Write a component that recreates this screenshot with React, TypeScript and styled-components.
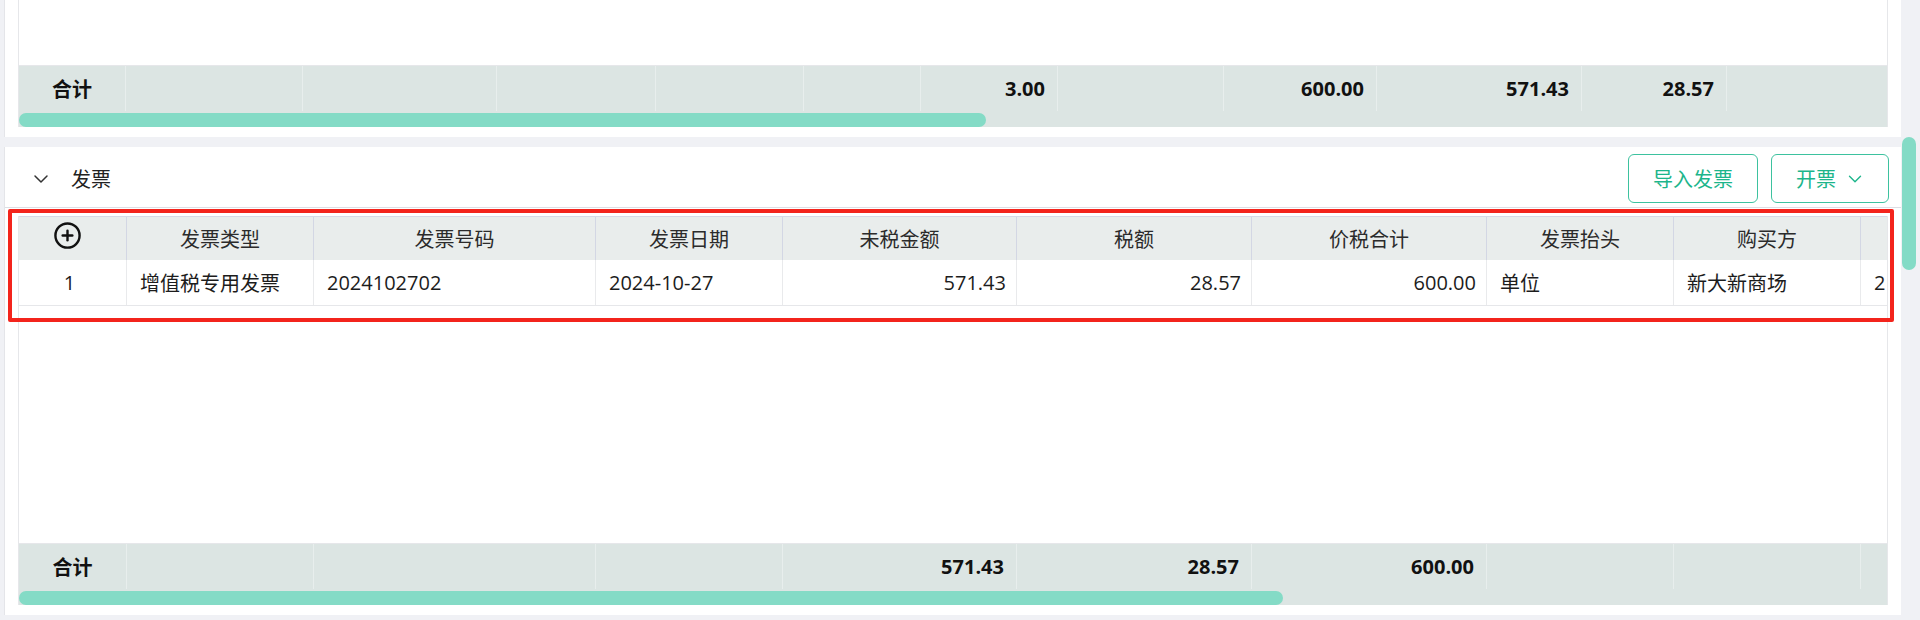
import React from "react";
import styled, { createGlobalStyle } from "styled-components";
import { ChevronDown, CirclePlus } from "lucide-react";

const GlobalStyle = createGlobalStyle`
  html, body { margin: 0; padding: 0; background: #f0f1f5; }
  body {
    width: 1920px;
    height: 620px;
    overflow: hidden;
    font-family: "Open Sans", "Noto Sans CJK SC", sans-serif;
    color: #1f1f1f;
  }
  * { box-sizing: border-box; }
`;

const Page = styled.div`
  position: relative;
  display: flex;
  width: 1920px;
  height: 620px;
  overflow: hidden;
  background: #f0f1f5;
`;

const Main = styled.div`
  flex: 0 0 1900px;
  display: flex;
  flex-direction: column;
  gap: 10px;
  padding: 0 0 5px 4px;
`;

const VScroll = styled.div`
  flex: 0 0 20px;
  padding: 137px 0 0 1px;
`;

const VThumb = styled.div`
  width: 14px;
  height: 133px;
  border-radius: 7px;
  background: #84dbc6;
`;

const Panel = styled.section<{ $height: number }>`
  height: ${(p) => p.$height}px;
  flex: 0 0 auto;
  display: flex;
  flex-direction: column;
  background: #ffffff;
  border-left: 1px solid #e4e5e9;
`;

const PanelHeader = styled.div`
  height: 61px;
  flex: 0 0 auto;
  display: flex;
  align-items: center;
  padding: 3px 12px 0 24px;
  border-bottom: 1px solid #dcdee4;
`;

const TitleToggle = styled.div`
  display: flex;
  align-items: center;
  gap: 18px;
  font-family: "Noto Sans CJK SC", sans-serif;
  font-size: 20px;
  color: #222;
  svg { color: #333; }
`;

const Actions = styled.div`
  margin-left: auto;
  display: flex;
  gap: 13px;
`;

const OutlineButton = styled.button<{ $menu?: boolean }>`
  height: 49px;
  display: flex;
  align-items: center;
  gap: 8px;
  padding: ${(p) => (p.$menu ? "0 22px 0 24px" : "0 24px")};
  border: 1px solid #3dc29f;
  border-radius: 6px;
  background: #fff;
  color: #1cb58b;
  font-family: "Noto Sans CJK SC", sans-serif;
  font-size: 20px;
  cursor: pointer;
`;

const TableArea = styled.div<{ $top: number }>`
  flex: 1 1 auto;
  display: flex;
  flex-direction: column;
  padding: ${(p) => p.$top}px 13px 10px 13px;
  min-height: 0;
`;

const TableFrame = styled.div`
  flex: 1 1 auto;
  display: flex;
  flex-direction: column;
  width: 1870px;
  overflow: hidden;
  border-left: 1px solid #e6e7ea;
  border-right: 1px solid #e6e7ea;
`;

const GridRow = styled.div<{ $cols: number[] }>`
  display: grid;
  grid-template-columns: ${(p) => p.$cols.map((c) => `${c}px`).join(" ")};
  flex: 0 0 auto;
`;

const HeadRow = styled(GridRow)`
  height: 44px;
  border-top: 1px solid #d6d9e6;
  background: #e9edec;
`;

const HeadCell = styled.div`
  display: flex;
  align-items: center;
  justify-content: center;
  border-right: 1px solid #d3d7e4;
  font-family: "Noto Sans CJK SC", sans-serif;
  font-size: 20px;
  color: #2b2b2b;
  white-space: nowrap;
  overflow: hidden;
  &:last-child { border-right: none; }
`;

const AddCell = styled(HeadCell)`
  padding: 0 10px 6px 0;
  svg { color: #111; }
`;

const BodyRow = styled(GridRow)`
  height: 46px;
  border-bottom: 1px solid #e6e7ea;
  background: #fff;
`;

const BodyCell = styled.div<{ $align?: "left" | "right" | "center" }>`
  display: flex;
  align-items: center;
  justify-content: ${(p) =>
    p.$align === "right" ? "flex-end" : p.$align === "center" ? "center" : "flex-start"};
  padding: ${(p) => (p.$align === "center" ? "0 6px 0 0" : "0 10px 0 13px")};
  border-right: 1px solid #e9eaec;
  font-size: 20px;
  color: #1c1c1c;
  white-space: nowrap;
  overflow: hidden;
  &:last-child { border-right: none; }
`;

const EmptyBody = styled.div`
  flex: 1 1 auto;
  background: #fff;
`;

const FootRow = styled(GridRow)`
  height: 46px;
  border-top: 1px solid #e6e7ea;
  background: #dce5e3;
`;

const FootCell = styled.div<{ $center?: boolean }>`
  display: flex;
  align-items: center;
  justify-content: ${(p) => (p.$center ? "center" : "flex-end")};
  padding: ${(p) => (p.$center ? "0" : "0 12px 0 0")};
  border-right: 1px solid #e8eeed;
  font-family: ${(p) => (p.$center ? `"Noto Sans CJK SC", sans-serif` : `"Open Sans", "Noto Sans CJK SC", sans-serif`)};
  font-weight: 700;
  font-size: 20px;
  color: #111;
  white-space: nowrap;
  &:last-child { border-right: none; }
`;

const HScroll = styled.div`
  flex: 0 0 16px;
  padding-top: 2px;
  background: #dce5e3;
`;

const HThumb = styled.div<{ $width: number }>`
  width: ${(p) => p.$width}px;
  height: 14px;
  border-radius: 7px;
  background: #84dbc6;
`;

const Annotation = styled.div`
  position: absolute;
  left: 8px;
  top: 209px;
  width: 1886px;
  height: 113px;
  border: 4px solid #f3241c;
  border-radius: 2px;
  pointer-events: none;
`;

const topCols = [107, 177, 194, 159, 148, 117, 137, 166, 153, 205, 145, 160];
const topTotals = ["", "", "", "", "", "3.00", "", "600.00", "571.43", "28.57", ""];

const invCols = [108, 187, 282, 187, 234, 235, 235, 187, 187, 187];
const invHeaders = ["发票类型", "发票号码", "发票日期", "未税金额", "税额", "价税合计", "发票抬头", "购买方", ""];
const invRow: { text: string; align: "left" | "right" | "center" }[] = [
  { text: "1", align: "center" },
  { text: "增值税专用发票", align: "left" },
  { text: "2024102702", align: "left" },
  { text: "2024-10-27", align: "left" },
  { text: "571.43", align: "right" },
  { text: "28.57", align: "right" },
  { text: "600.00", align: "right" },
  { text: "单位", align: "left" },
  { text: "新大新商场", align: "left" },
  { text: "2", align: "left" },
];
const invTotals = ["", "", "", "571.43", "28.57", "600.00", "", "", ""];

export default function App() {
  return (
    <>
      <GlobalStyle />
      <Page>
        <Main>
          <Panel $height={137}>
            <TableArea $top={0}>
              <TableFrame>
                <EmptyBody />
                <FootRow $cols={topCols}>
                  <FootCell $center>合计</FootCell>
                  {topTotals.map((v, i) => (
                    <FootCell key={i}>{v}</FootCell>
                  ))}
                </FootRow>
                <HScroll>
                  <HThumb $width={967} />
                </HScroll>
              </TableFrame>
            </TableArea>
          </Panel>

          <Panel $height={468}>
            <PanelHeader>
              <TitleToggle>
                <ChevronDown size={24} strokeWidth={1.5} />
                <span>发票</span>
              </TitleToggle>
              <Actions>
                <OutlineButton>导入发票</OutlineButton>
                <OutlineButton $menu>
                  开票
                  <ChevronDown size={22} strokeWidth={1.5} />
                </OutlineButton>
              </Actions>
            </PanelHeader>
            <TableArea $top={8}>
              <TableFrame>
                <HeadRow $cols={invCols}>
                  <AddCell>
                    <CirclePlus size={29} strokeWidth={2} />
                  </AddCell>
                  {invHeaders.map((h, i) => (
                    <HeadCell key={i}>{h}</HeadCell>
                  ))}
                </HeadRow>
                <BodyRow $cols={invCols}>
                  {invRow.map((c, i) => (
                    <BodyCell key={i} $align={c.align}>
                      {c.text}
                    </BodyCell>
                  ))}
                </BodyRow>
                <EmptyBody />
                <FootRow $cols={invCols}>
                  <FootCell $center>合计</FootCell>
                  {invTotals.map((v, i) => (
                    <FootCell key={i}>{v}</FootCell>
                  ))}
                </FootRow>
                <HScroll>
                  <HThumb $width={1264} />
                </HScroll>
              </TableFrame>
            </TableArea>
          </Panel>
        </Main>
        <VScroll>
          <VThumb />
        </VScroll>
        <Annotation />
      </Page>
    </>
  );
}
